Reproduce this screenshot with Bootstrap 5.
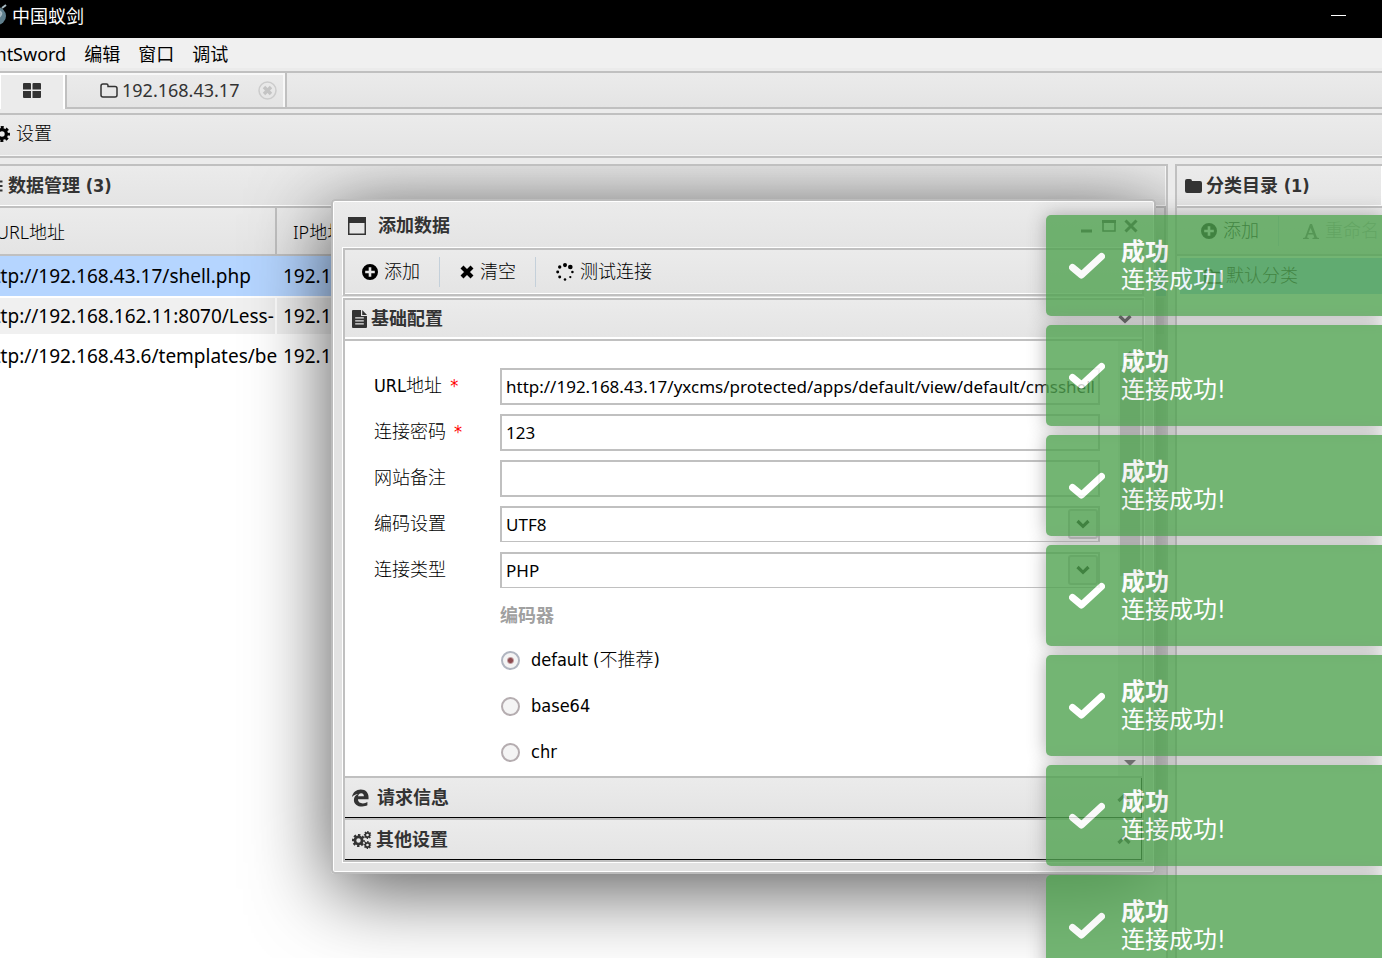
<!DOCTYPE html>
<html lang="zh-CN">
<head>
<meta charset="utf-8">
<meta name="viewport" content="width=device-width, initial-scale=1">
<title>中国蚁剑</title>
<link href="https://cdn.jsdelivr.net/npm/bootstrap@5.3.0/dist/css/bootstrap.min.css" rel="stylesheet">
<style>
:root { --line: #c0c0c0; --ink: #333; --face: linear-gradient(#ebebeb, #e4e4e4); }
body { font-family: "DejaVu Sans Condensed", "Noto Sans CJK SC", sans-serif; font-size: 18px; line-height: 24px; color: #000; background: #ebebeb; }
svg { flex: none; display: block; }
button { font: inherit; color: inherit; }
.cjk-light { font-weight: 300; }
.titlebar { height: 38px; background: #000; color: #fff; padding-bottom: 8px; font-family: "Noto Sans CJK SC", sans-serif; }
.titlebar .logo { margin-left: -12px; }
.titlebar .min { margin-right: 35px; width: 16px; height: 20px; }
.menubar { height: 33px; background: #f0f0f0; margin-left: -16px; gap: 18px; padding-top: 2px; font-family: "Noto Sans", "Noto Sans CJK SC", sans-serif; border-bottom: 3px solid #ebebeb; }
.menubar a { color: #000; text-decoration: none; }
.tabstrip { height: 38px; border: solid var(--line); border-width: 2px 0; background: var(--face); font-family: "Noto Sans", sans-serif; }
.tabstrip button { border: 0; background: none; padding: 0; }
.tab-home { width: 65px; height: 36px; border: 2px solid #fff !important; border-width: 2px 2px 0 1px !important; background: #ebebeb !important; box-shadow: 2px 0 var(--line); padding-bottom: 3px !important; }
.tab-file { width: 222px; height: 34px; border-right: 2px solid var(--line); box-shadow: inset -2px 2px #f8f8f8; padding-left: 35px; color: #333; }
.toolrow { height: 45px; margin-top: 4px; border: solid var(--line); border-width: 2px 0; background: var(--face); box-shadow: inset 0 -1px #f6f6f6; padding-bottom: 4px; }
.toolrow svg { margin-left: -6px; margin-right: 6px; }
.work { margin-top: 6px; gap: 7px; min-height: 0; }
.pane { border: 2px solid var(--line); border-bottom: 0; background: #fff; position: relative; overflow: hidden; }
.pane-main { border-left: 0; }
.pane-side { width: 207px; border-right: 0; flex: none; }
.pane-head { height: 42px; background: var(--face); border-bottom: 2px solid var(--line); box-shadow: inset -1px -1px #fff; font-weight: 700; color: var(--ink); white-space: nowrap; }
.grid { table-layout: fixed; width: 1190px; margin-left: -24px; border-collapse: separate; border-spacing: 0; font-family: "Noto Sans", "Noto Sans CJK SC", sans-serif; font-size: 19px; }
.grid th { height: 48px; font-size: 18px; font-weight: 300; padding: 2px 16px 0 16px; background: var(--face); border-bottom: 2px solid var(--line); border-right: 2px solid var(--line); white-space: nowrap; overflow: hidden; }
.grid th.first { padding-left: 20px; }
.grid td { height: 40px; padding: 0 0 0 6px; white-space: nowrap; overflow: hidden; }
.grid .first { width: 301px; }
.grid .picked td { background: #b5d5ff; }
.grid .striped td { background: #f0f0f0; border: solid #fff; border-width: 2px 2px 2px 0; }
.side-tools { height: 48px; background: var(--face); border-bottom: 2px solid var(--line); white-space: nowrap; }
.side-tools button, .dlg-tools button { border: 0; background: none; padding: 0; white-space: nowrap; gap: 6px; }
.side-tools .off { color: #aaa; }
.side-row { height: 36px; margin: 2px 0 0 3px; background: #a4ccf5; }
.dlg { position: absolute; left: 331px; right: 10px; top: 33px; border: 2px solid #bcbcbc; border-radius: 4px; background: linear-gradient(#ebebeb, #e2e2e2 60px); box-shadow: inset 0 0 0 1px #fff, 0 15px 80px rgba(0,0,0,.67); padding: 0 10px 10px 10px; }
.dlg-head { height: 47px; color: var(--ink); font-weight: 700; padding: 2px 6px 0 5px; }
.dlg-head button { border: 0; background: none; padding: 0; }
.dlg-tools { height: 48px; border: 2px solid var(--line); background: var(--face); box-shadow: -1px -1px #fff, inset 0 -1px #fff; padding-left: 17px; }
.sep { width: 1px; height: 30px; background: #c4d0da; margin: 0 20px 0 19px; }
.acc { margin-top: 2px; border: 2px solid var(--line); box-shadow: 0 0 0 1px #fff; background: #fff; }
.acc-head { width: 100%; height: 39px; border: 0; background: var(--face); box-shadow: inset 0 -2px #fff; padding: 0 10px 1px 7px; color: var(--ink); font-weight: 700; }
.acc-shut { height: 40px; box-shadow: none; border-right: 1px solid #000; border-bottom: 1px solid #000; padding-bottom: 0; }
.acc-line { height: 2px; background: var(--line); }
.acc-body { height: 435px; overflow: hidden; }
.fields { padding: 27px 18px 0 29px; min-width: 0; }
.f-row { height: 46px; }
.f-row > label { width: 126px; flex: none; height: 36px; line-height: 36px; font-weight: 300; }
.f-row .req { color: red; margin-left: 8px; }
.box { width: 100%; height: 37px; border: 2px solid var(--line); border-radius: 0; padding: 0 4px; font-family: "Noto Sans", "Noto Sans CJK SC", sans-serif; font-size: 17px; background: #fff; color: #000; appearance: none; }
.drop .box { height: 36px; border-bottom-width: 1px; }
.drop-btn { position: absolute; right: 2px; top: 3px; width: 30px; height: 30px; border: 2px solid var(--line); border-radius: 3px; background: #ececec; pointer-events: none; }
.choices { margin-left: 126px; }
.choices .cap { color: #a0a0a0; font-weight: 700; height: 39px; line-height: 36px; }
.choices .opt { height: 46px; gap: 11px; }
.choices input { appearance: none; width: 19px; height: 19px; margin: 0 0 0 1px; border: 2px solid #b5adb0; border-radius: 50%; background: #f4f4f4; }
.choices input:checked { border-color: #b0b5c0; background: radial-gradient(circle, #8d4a4f 2px, #f4f4f4 4px); }
.scroller { width: 24px; background: #f0f0f0; padding: 10px 2px; flex: none; }
.scroller i { display: block; width: 20px; height: 210px; background: #c1c1c1; }
.toasts { position: absolute; right: 0; top: 215px; bottom: 0; width: 356px; padding-left: 20px; overflow: hidden; margin-top: -20px; padding-top: 20px; pointer-events: none; }
.note { height: 101px; margin-bottom: 9px; border-radius: 5px 0 0 5px; background: #51a351; box-shadow: 0 0 18px #999; opacity: .8; color: #fff; padding-left: 23px; gap: 16px; font-size: 24px; line-height: 28px; white-space: nowrap; }
</style>
</head>
<body class="vh-100 d-flex flex-column overflow-hidden position-relative">
<svg width="0" height="0" class="position-absolute" aria-hidden="true">
  <symbol id="gear" viewBox="0 0 16 16"><g fill="none" stroke="currentColor"><circle cx="8" cy="8" r="4.4" stroke-width="3.4"/><circle cx="8" cy="8" r="6.6" stroke-width="2.8" stroke-dasharray="2.9 2.28" stroke-dashoffset="1.4"/></g></symbol>
  <symbol id="plus" viewBox="0 0 16 16"><path fill="currentColor" fill-rule="evenodd" d="M8 0a8 8 0 1 1 0 16A8 8 0 0 1 8 0zM6.7 3.2v3.5H3.2v2.6h3.5v3.5h2.6V9.300h3.5V6.700H9.300V3.200z"/></symbol>
  <symbol id="cross" viewBox="0 0 14 14"><path d="M2 2 12 12M12 2 2 12" stroke="currentColor" stroke-width="4.200" fill="none"/></symbol>
  <symbol id="down" viewBox="0 0 14 10"><path d="M1.500 2 7 7.300 12.500 2" stroke="currentColor" stroke-width="3.200" fill="none"/></symbol>
  <symbol id="up" viewBox="0 0 14 10"><path d="M1.500 8 7 2.700 12.500 8" stroke="currentColor" stroke-width="3.200" fill="none"/></symbol>
  <symbol id="outline" viewBox="0 0 18 15"><path d="M1 3a2 2 0 0 1 2-2h3.500a1.500 1.500 0 0 1 1.500 1.500V3.500h7a2 2 0 0 1 2 2v6.500a2 2 0 0 1-2 2H3a2 2 0 0 1-2-2z" fill="none" stroke="currentColor" stroke-width="1.500"/></symbol>
  <symbol id="win" viewBox="0 0 18 18"><path fill="currentColor" fill-rule="evenodd" d="M0 0h18v18H0zM1.500 6v10.500h15V6z"/></symbol>
  <symbol id="tick" viewBox="0 0 36 30"><path d="M3.500 16.500 12.500 24 32.500 5.500" fill="none" stroke="#fff" stroke-width="7" stroke-linecap="round" stroke-linejoin="round"/></symbol>
</svg>

<header class="titlebar d-flex align-items-center justify-content-between">
  <div class="d-flex align-items-center gap-1">
    <svg class="logo" width="20" height="24" viewBox="0 0 20 24"><circle cx="9" cy="13" r="9" fill="#5f7f8d"/><path d="M8 9c4-2 7 1 4 4s-1 5-4 6M14 5l4-3" stroke="#a9bcc4" stroke-width="2" fill="none"/></svg>
    <span>中国蚁剑</span>
  </div>
  <svg class="min" viewBox="0 0 16 20"><path d="M0 10.500h15" stroke="#fff"/></svg>
</header>
<nav class="menubar d-flex align-items-center flex-shrink-0">
  <a href="#">AntSword</a><a href="#">编辑</a><a href="#">窗口</a><a href="#">调试</a>
</nav>
<div class="tabstrip d-flex flex-shrink-0">
  <button class="tab-home d-flex justify-content-center align-items-center" aria-label="首页"><svg width="18" height="15" viewBox="0 0 18 15"><path fill="#333" d="M1 0h6a1 1 0 0 1 1 1v5.500H0V1a1 1 0 0 1 1-1zM10.500 0H17a1 1 0 0 1 1 1v5.500H9.500V1a1 1 0 0 1 1-1zM0 8h8v7H1a1 1 0 0 1-1-1zM9.500 8H18V14a1 1 0 0 1-1 1H9.500z"/></svg></button>
  <div class="tab-file d-flex align-items-center">
    <svg width="18" height="15" class="me-1"><use href="#outline"/></svg><span>192.168.43.17</span>
    <button class="ms-auto me-2" aria-label="关闭"><svg width="19" height="19" viewBox="0 0 19 19"><circle cx="9.500" cy="9.500" r="8.500" fill="none" stroke="#ccc" stroke-width="1.500"/><path d="m6 6 7 7m0-7-7 7" stroke="#c4c4c4" stroke-width="3.500"/></svg></button>
  </div>
</div>
<div class="toolrow d-flex align-items-center flex-shrink-0">
  <svg width="16" height="16"><use href="#gear"/></svg><span class="cjk-light">设置</span>
</div>

<main class="work d-flex flex-fill">
  <section class="pane pane-main flex-fill">
    <div class="pane-head d-flex align-items-center"><svg width="8" height="12" viewBox="0 0 8 12"><path d="M0 1.500h2.500M0 6h2.500M0 10.500h2.500" stroke="#333" stroke-width="2.200"/></svg>数据管理 (3)</div>
    <table class="grid">
      <thead><tr><th class="first">URL地址</th><th>IP地址</th></tr></thead>
      <tbody>
        <tr class="picked"><td>http://192.168.43.17/shell.php</td><td>192.168.43.17</td></tr>
        <tr class="striped"><td>http://192.168.162.11:8070/Less-</td><td>192.168.162.11</td></tr>
        <tr><td>http://192.168.43.6/templates/beez</td><td>192.168.43.6</td></tr>
      </tbody>
    </table>

    <div class="dlg" role="dialog" aria-label="添加数据">
      <div class="dlg-head d-flex align-items-center">
        <svg width="18" height="18" class="me-2"><use href="#win"/></svg><span class="ps-1">添加数据</span>
        <div class="ms-auto d-flex align-items-center gap-2">
          <button aria-label="最小化"><svg width="16" height="14" viewBox="0 0 16 14"><path d="M3 12h11" stroke="#333" stroke-width="3"/></svg></button>
          <button aria-label="最大化"><svg width="14" height="12" viewBox="0 0 14 12"><path d="M1 1.500h12V11H1z" fill="none" stroke="#333" stroke-width="1.500"/><path d="M0 1.500h14" stroke="#333" stroke-width="3"/></svg></button>
          <button aria-label="关闭"><svg width="14" height="14" viewBox="0 0 14 14"><path d="m1.500 1.500 11 11m0-11-11 11" stroke="#333" stroke-width="3"/></svg></button>
        </div>
      </div>
      <div class="dlg-tools d-flex align-items-center">
        <button class="d-flex align-items-center"><svg width="16" height="16"><use href="#plus"/></svg><span class="cjk-light">添加</span></button>
        <span class="sep"></span>
        <button class="d-flex align-items-center"><svg width="14" height="14"><use href="#cross"/></svg><span class="cjk-light">清空</span></button>
        <span class="sep"></span>
        <button class="d-flex align-items-center"><svg width="18" height="18" viewBox="0 0 17 17"><circle cx="8.500" cy="2" r="1.900"/><circle cx="13.500" cy="3.800" r="2.200"/><circle cx="15.500" cy="8.500" r="1.200"/><circle cx="13.500" cy="13.300" r="1.100"/><circle cx="8.500" cy="15.500" r="1.200"/><circle cx="3.500" cy="13.300" r="1.400"/><circle cx="1.600" cy="8.500" r="1.400"/><circle cx="3.500" cy="3.800" r="1.600"/></svg><span class="cjk-light">测试连接</span></button>
      </div>
      <div class="acc">
        <button class="acc-head d-flex align-items-center"><svg width="15" height="18" viewBox="0 0 15 18" class="me-1"><path fill="#333" fill-rule="evenodd" d="M1 0h8v6h6v11a1 1 0 0 1-1 1H1a1 1 0 0 1-1-1V1a1 1 0 0 1 1-1zM10.200 0 15 4.900h-4.800zM3.200 7.200v1.300h8.600V7.200zm0 3v1.300h8.600v-1.300zm0 3v1.300h8.600v-1.300z"/></svg><span>基础配置</span><svg width="14" height="10" class="ms-auto"><use href="#down"/></svg></button>
        <div class="acc-line"></div>
        <div class="acc-body d-flex">
          <form class="fields flex-fill">
            <div class="f-row d-flex"><label for="url">URL地址<span class="req">*</span></label><div class="flex-fill"><input id="url" class="box" value="http://192.168.43.17/yxcms/protected/apps/default/view/default/cmsshell"></div></div>
            <div class="f-row d-flex"><label for="pwd">连接密码<span class="req">*</span></label><div class="flex-fill"><input id="pwd" class="box" value="123"></div></div>
            <div class="f-row d-flex"><label for="memo">网站备注</label><div class="flex-fill"><input id="memo" class="box"></div></div>
            <div class="f-row d-flex"><label for="enc">编码设置</label><div class="flex-fill drop position-relative"><select id="enc" class="box"><option>UTF8</option></select><span class="drop-btn d-flex align-items-center justify-content-center"><svg width="14" height="10"><use href="#down"/></svg></span></div></div>
            <div class="f-row d-flex"><label for="kind">连接类型</label><div class="flex-fill drop position-relative"><select id="kind" class="box"><option>PHP</option></select><span class="drop-btn d-flex align-items-center justify-content-center"><svg width="14" height="10"><use href="#down"/></svg></span></div></div>
            <div class="choices">
              <div class="cap">编码器</div>
              <div class="opt d-flex align-items-center"><input type="radio" name="coder" id="c1" checked><label for="c1" class="cjk-light">default (不推荐)</label></div>
              <div class="opt d-flex align-items-center"><input type="radio" name="coder" id="c2"><label for="c2">base64</label></div>
              <div class="opt d-flex align-items-center"><input type="radio" name="coder" id="c3"><label for="c3">chr</label></div>
            </div>
          </form>
          <div class="scroller d-flex flex-column align-items-center"><svg width="12" height="15" viewBox="0 0 12 15"><path d="M0 6 6 0l6 6z" fill="#505050"/></svg><i></i><svg width="12" height="6" viewBox="0 0 12 6" class="mt-auto"><path d="M0 0h12L6 6z" fill="#505050"/></svg></div>
        </div>
        <div class="acc-line"></div>
        <button class="acc-head acc-shut d-flex align-items-center"><svg width="17" height="18" viewBox="0 0 18 18" class="me-2"><path fill="#333" d="M0 8C.8 3 4.500 0 9.300 0 14.800 0 17.500 3.700 17.500 8v2.400H6.300c0 3.100 2.500 4.300 5.200 4.300 1.800 0 3.500-.6 4.800-1.400v3.500C15 17.500 13 18 10.700 18 5.500 18 2 15.200 2 11c0-3 1.700-5 4.500-6.300C4 4.900 1.700 6 0 8zm6.400-.8h6.200C12.600 5 11.500 4 9.700 4 8 4 6.700 5 6.400 7.200z"/></svg><span>请求信息</span><svg width="14" height="10" class="ms-auto"><use href="#up"/></svg></button>
        <div class="acc-line"></div>
        <button class="acc-head acc-shut d-flex align-items-center"><svg width="20" height="18" viewBox="0 0 20 18" class="me-1"><svg x="0" y="3" width="13" height="13"><use href="#gear"/></svg><svg x="11.500" y="0" width="8" height="8"><use href="#gear"/></svg><svg x="11.500" y="10" width="8" height="8"><use href="#gear"/></svg></svg><span>其他设置</span><svg width="14" height="10" class="ms-auto"><use href="#up"/></svg></button>
      </div>
    </div>
  </section>

  <aside class="pane pane-side">
    <div class="pane-head d-flex align-items-center ps-2"><svg width="17" height="14" viewBox="0 0 17 14" class="me-1"><path fill="#333" d="M0 2a2 2 0 0 1 2-2h3a2 2 0 0 1 2 2h8a2 2 0 0 1 2 2v8a2 2 0 0 1-2 2H2a2 2 0 0 1-2-2z"/></svg>分类目录 (1)</div>
    <div class="side-tools d-flex align-items-center ps-4">
      <button class="d-flex align-items-center"><svg width="16" height="16"><use href="#plus"/></svg><span class="cjk-light">添加</span></button>
      <span class="sep"></span>
      <button class="off d-flex align-items-center ps-1" disabled><svg width="16" height="15" viewBox="0 0 16 15"><path fill="#666" fill-rule="evenodd" d="M7 0h2l5 13.500 2 .5v1h-6.500v-1l1.800-.5-1-3H5l-1 3 1.800.5v1H0v-1l2-.5zM7.600 4 5.600 9h4z"/></svg><span class="cjk-light">重命名</span></button>
    </div>
    <div class="side-row d-flex align-items-center ps-4"><svg width="18" height="15" class="me-1"><use href="#outline"/></svg><span class="cjk-light">默认分类</span></div>
  </aside>
</main>

<div class="toasts" aria-live="polite" id="toasts">
  <div class="note d-flex align-items-center"><svg width="36" height="30"><use href="#tick"/></svg><div><b>成功</b><br>连接成功!</div></div>
  <div class="note d-flex align-items-center"><svg width="36" height="30"><use href="#tick"/></svg><div><b>成功</b><br>连接成功!</div></div>
  <div class="note d-flex align-items-center"><svg width="36" height="30"><use href="#tick"/></svg><div><b>成功</b><br>连接成功!</div></div>
  <div class="note d-flex align-items-center"><svg width="36" height="30"><use href="#tick"/></svg><div><b>成功</b><br>连接成功!</div></div>
  <div class="note d-flex align-items-center"><svg width="36" height="30"><use href="#tick"/></svg><div><b>成功</b><br>连接成功!</div></div>
  <div class="note d-flex align-items-center"><svg width="36" height="30"><use href="#tick"/></svg><div><b>成功</b><br>连接成功!</div></div>
  <div class="note d-flex align-items-center"><svg width="36" height="30"><use href="#tick"/></svg><div><b>成功</b><br>连接成功!</div></div>
</div>
<script src="https://cdn.jsdelivr.net/npm/bootstrap@5.3.0/dist/js/bootstrap.bundle.min.js"></script>
</body>
</html>
